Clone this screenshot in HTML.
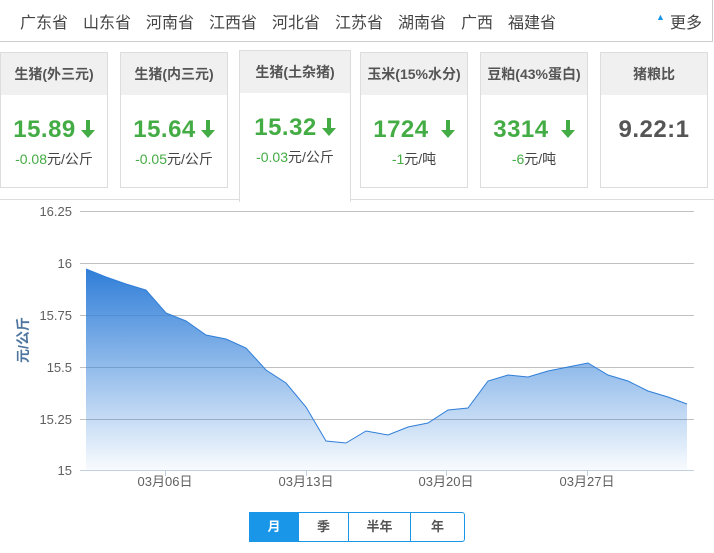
<!DOCTYPE html>
<html><head><meta charset="utf-8"><style>
body{margin:0;width:714px;height:553px;background:#fff;font-family:"Liberation Sans","Noto Sans CJK SC",sans-serif;position:relative;overflow:hidden}
.nav{position:absolute;left:0;top:0;width:713px;height:42px;border-bottom:1px solid #ccc;border-right:1px solid #ccc;box-sizing:border-box}
.nav span{position:absolute;top:9px;font-size:16px;color:#444}
.card{position:absolute;top:52px;width:108px;height:136px;border:1px solid #ddd;box-sizing:border-box;text-align:center}
.card .h{height:42px;background:#f0f0f0;font-size:14px;font-weight:bold;color:#555;line-height:42px}
.card .v{margin-top:21px;font-size:24px;font-weight:bold;color:#44ac44;letter-spacing:0.5px;line-height:28px}
.card .v svg{vertical-align:-1px;margin-left:5px}
.card .c{margin-top:5px;font-size:14px;color:#444}
.card .c b{font-weight:normal;color:#44ac44}
.btn{position:absolute;top:512px;height:30px;border:1px solid #1a96e8;box-sizing:border-box;font-size:13px;font-weight:bold;color:#555;text-align:center;line-height:28px}
</style></head><body>
<div class="nav">
<span style="left:20px">广东省</span><span style="left:83px">山东省</span><span style="left:146px">河南省</span><span style="left:209px">江西省</span><span style="left:272px">河北省</span><span style="left:335px">江苏省</span><span style="left:398px">湖南省</span><span style="left:461px">广西</span><span style="left:508px">福建省</span>
<span style="left:656px;top:12px;font-size:9px;color:#1a96e8">▲</span><span style="left:670px">更多</span>
</div>
<div class="card" style="left:0"><div class="h">生猪(外三元)</div><div class="v">15.89<svg width="14" height="18" viewBox="0 0 14 18"><path d="M5 0h4v10h5l-7 8-7-8h5z" fill="#44ac44"/></svg></div><div class="c"><b>-0.08</b>元/公斤</div></div>
<div class="card" style="left:120px"><div class="h">生猪(内三元)</div><div class="v">15.64<svg width="14" height="18" viewBox="0 0 14 18"><path d="M5 0h4v10h5l-7 8-7-8h5z" fill="#44ac44"/></svg></div><div class="c"><b>-0.05</b>元/公斤</div></div>
<div class="card" style="left:239px;top:50px;width:112px;height:152px;border-bottom:none"><div class="h">生猪(土杂猪)</div><div class="v">15.32<svg width="14" height="18" viewBox="0 0 14 18"><path d="M5 0h4v10h5l-7 8-7-8h5z" fill="#44ac44"/></svg></div><div class="c"><b>-0.03</b>元/公斤</div></div>
<div class="card" style="left:360px"><div class="h">玉米(15%水分)</div><div class="v">1724 <svg width="14" height="18" viewBox="0 0 14 18"><path d="M5 0h4v10h5l-7 8-7-8h5z" fill="#44ac44"/></svg></div><div class="c"><b>-1</b>元/吨</div></div>
<div class="card" style="left:480px"><div class="h">豆粕(43%蛋白)</div><div class="v">3314 <svg width="14" height="18" viewBox="0 0 14 18"><path d="M5 0h4v10h5l-7 8-7-8h5z" fill="#44ac44"/></svg></div><div class="c"><b>-6</b>元/吨</div></div>
<div class="card" style="left:600px"><div class="h">猪粮比</div><div class="v" style="color:#555">9.22:1</div></div>
<div style="position:absolute;left:0;top:199px;width:239px;height:1px;background:#ddd"></div>
<div style="position:absolute;left:351px;top:199px;width:363px;height:1px;background:#ddd"></div>
<svg style="position:absolute;left:0;top:0" width="714" height="553">
<defs><linearGradient id="g" x1="0" y1="0" x2="0" y2="1"><stop offset="0" stop-color="#2f7ed8"/><stop offset="1" stop-color="#2f7ed8" stop-opacity="0.03"/></linearGradient></defs>
<g stroke="#c0c0c0" stroke-width="1">
<line x1="80" y1="211.5" x2="694" y2="211.5"/><line x1="80" y1="263.5" x2="694" y2="263.5"/><line x1="80" y1="315.5" x2="694" y2="315.5"/><line x1="80" y1="367.5" x2="694" y2="367.5"/><line x1="80" y1="419.5" x2="694" y2="419.5"/>
</g>
<path d="M86,269 L106,277 L126,284 L146,290 L166,313 L186,321 L206,335 L226,339 L246,348 L266,370 L286,383 L306,407 L326,441 L346,443 L366,431 L388,435 L408,427 L428,423 L448,410 L468,408 L488,381 L508,375 L528,377 L548,371 L568,367 L588,363 L608,375 L628,381 L648,391 L668,397 L687,404 L687,470 L86,470Z" fill="url(#g)"/>
<path d="M86,269 L106,277 L126,284 L146,290 L166,313 L186,321 L206,335 L226,339 L246,348 L266,370 L286,383 L306,407 L326,441 L346,443 L366,431 L388,435 L408,427 L428,423 L448,410 L468,408 L488,381 L508,375 L528,377 L548,371 L568,367 L588,363 L608,375 L628,381 L648,391 L668,397 L687,404" fill="none" stroke="#2f7ed8" stroke-width="1"/>
<line x1="80" y1="470.5" x2="694" y2="470.5" stroke="#c0d0e0"/>
<g stroke="#c0d0e0"><line x1="165.5" y1="470" x2="165.5" y2="476"/><line x1="306.5" y1="470" x2="306.5" y2="476"/><line x1="446.5" y1="470" x2="446.5" y2="476"/><line x1="587.5" y1="470" x2="587.5" y2="476"/></g>
<g font-family="Liberation Sans,Noto Sans CJK SC,sans-serif" font-size="13" fill="#606060" text-anchor="end">
<text x="72" y="216">16.25</text><text x="72" y="268">16</text><text x="72" y="320">15.75</text><text x="72" y="372">15.5</text><text x="72" y="424">15.25</text><text x="72" y="475">15</text>
</g>
<g font-family="Liberation Sans,Noto Sans CJK SC,sans-serif" font-size="13" fill="#606060" text-anchor="middle">
<text x="165" y="486">03月06日</text><text x="306" y="486">03月13日</text><text x="446" y="486">03月20日</text><text x="587" y="486">03月27日</text>
</g>
<text transform="translate(28,340) rotate(-90)" text-anchor="middle" font-family="Liberation Sans,Noto Sans CJK SC,sans-serif" font-size="14" font-weight="bold" fill="#4d759e">元/公斤</text>
</svg>
<div class="btn" style="left:249px;width:50px;background:#1a96e8;color:#fff">月</div>
<div class="btn" style="left:298px;width:51px">季</div>
<div class="btn" style="left:348px;width:63px">半年</div>
<div class="btn" style="left:410px;width:55px;border-radius:0 3px 3px 0">年</div>
</body></html>
